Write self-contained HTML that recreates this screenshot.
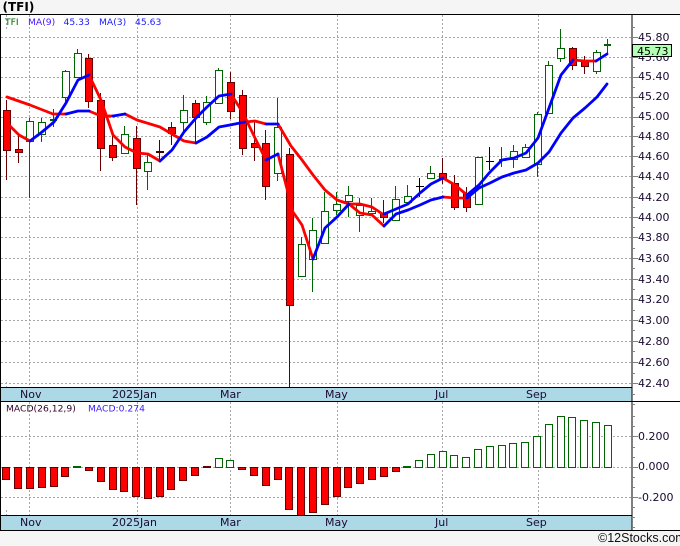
<!DOCTYPE html>
<html><head><meta charset="utf-8"><title>TFI</title>
<style>
html,body{margin:0;padding:0;background:#f5f5f5;width:680px;height:546px;overflow:hidden}
svg{display:block}
text{font-family:"DejaVu Sans",sans-serif;font-size:11px;fill:#1a0a33}
.s{font-size:9.2px}
</style></head><body>
<svg width="680" height="546" viewBox="0 0 680 546" xmlns="http://www.w3.org/2000/svg">
<rect x="0" y="14" width="680" height="517" fill="#fff"/>
<rect x="1" y="388" width="631" height="13" fill="#add8e6"/>
<rect x="1" y="516" width="631" height="14" fill="#add8e6"/>
<g shape-rendering="crispEdges" fill="none">
<path stroke="#a6a6a6" stroke-dasharray="2 2" d="M1 37.5H632M1 57.5H632M1 77.5H632M1 97.5H632M1 117.5H632M1 136.5H632M1 156.5H632M1 176.5H632M1 197.5H632M1 217.5H632M1 237.5H632M1 258.5H632M1 279.5H632M1 299.5H632M1 320.5H632M1 341.5H632M1 362.5H632M1 383.5H632M1 436.5H632M1 467.5H632M1 497.5H632"/>
<path stroke="#a6a6a6" stroke-dasharray="2 2" d="M29.5 15V388M137.5 15V388M230.5 15V388M337.5 15V388M442.5 15V388M538.5 15V388M29.5 402V516M137.5 402V516M230.5 402V516M337.5 402V516M442.5 402V516M538.5 402V516M6.5 15V30M6.5 382V388M6.5 510V516"/>
<path stroke="#808080" d="M633 37.5h5M633 57.5h5M633 77.5h5M633 97.5h5M633 117.5h5M633 136.5h5M633 156.5h5M633 176.5h5M633 197.5h5M633 217.5h5M633 237.5h5M633 258.5h5M633 279.5h5M633 299.5h5M633 320.5h5M633 341.5h5M633 362.5h5M633 383.5h5M633 436.5h5M633 467.5h5M633 497.5h5"/>
<path stroke="#808080" d="M633 27.5h2M633 47.5h2M633 67.5h2M633 87.5h2M633 107.5h2M633 126.5h2M633 146.5h2M633 166.5h2M633 187.5h2M633 207.5h2M633 227.5h2M633 248.5h2M633 268.5h2M633 289.5h2M633 310.5h2M633 330.5h2M633 351.5h2M633 373.5h2M633 394.5h2M633 404.5h2M633 416.5h2M633 426.5h2M633 447.5h2M633 457.5h2M633 477.5h2M633 487.5h2M633 507.5h2M633 517.5h2M633 527.5h2"/>

<!-- green candles -->
<path stroke="#006400" d="M29.5 118V198M41.5 118V142M53.5 109V127M65.5 70V103M77.5 49V78M124.5 126V153M147.5 155V190M183.5 95V133M206.5 96V125M218.5 68V103M277.5 98V181M301.5 237V276M312.5 218V292M324.5 192V243M336.5 192V215M348.5 186V217M359.5 198V232M371.5 198V213M395.5 186V220M407.5 185V203M430.5 166V179M478.5 157V204M501.5 147V167M513.5 145V168M525.5 144V157M537.5 112V177M548.5 61V113M560.5 29V62M596.5 50V74M607.5 39V55"/>
<path stroke="#006400" fill="#fff" d="M26.500 121.500h7v20h-7zM38.500 122.500h7v12h-7zM62.500 71.500h7v26h-7zM74.500 53.500h7v24h-7zM121.500 134.500h7v19h-7zM144.500 162.500h7v9h-7zM180.500 110.500h7v12h-7zM203.500 102.500h7v20h-7zM215.500 70.500h7v33h-7zM274.500 127.500h7v46h-7zM298.500 244.500h7v32h-7zM309.500 230.500h7v29h-7zM321.500 211.500h7v32h-7zM333.500 204.500h7v6h-7zM345.500 195.500h7v6h-7zM356.500 205.500h7v10h-7zM368.500 211.500h7v2h-7zM392.500 199.500h7v21h-7zM404.500 196.500h7v6h-7zM427.500 173.500h7v5h-7zM475.500 157.500h7v47h-7zM510.500 151.500h7v8h-7zM522.500 147.500h7v10h-7zM534.500 114.500h7v50h-7zM545.500 65.500h7v48h-7zM557.500 48.500h7v10h-7zM593.500 52.500h7v19h-7z"/>
<path stroke="#006400" d="M50 119.500h7M50 120.500h7M499 159.500h7M499 160.500h7M604 44.500h7M604 45.500h7"/>
<!-- red candles -->
<path stroke="#600" d="M6.500 100V180M18.500 133V163M88.500 54V108M100.500 93V171M112.500 135V161M136.500 126V205M171.500 122V145M195.500 100V143M230.500 72V119M242.500 90V155M254.500 120V161M265.500 130V200M289.500 148V387M383.500 200V223M442.500 158V184M454.500 175V210M466.500 187V212M572.500 47V70M584.500 56V74"/>
<path stroke="#600" fill="#f00" d="M3.500 110.500h7v40h-7zM15.500 149.500h7v3h-7zM85.500 58.500h7v43h-7zM97.500 100.500h7v48h-7zM109.500 145.500h7v12h-7zM133.500 138.500h7v30h-7zM168.500 127.500h7v6h-7zM192.500 103.500h7v14h-7zM227.500 82.500h7v29h-7zM239.500 95.500h7v53h-7zM251.500 143.500h7v4h-7zM262.500 143.500h7v43h-7zM286.500 154.500h7v151h-7zM380.500 213.500h7v4h-7zM439.500 173.500h7v6h-7zM451.500 183.500h7v24h-7zM463.500 193.500h7v14h-7zM569.500 48.500h7v17h-7zM581.500 60.500h7v6h-7z"/>
<!-- dojis -->
<path stroke="#4a0000" d="M159.500 140V162M156 152.500h8M156 151.500h8"/>
<path stroke="#000" d="M419.500 178V197M416 186.500h8M489.500 147V170M486 161.500h8"/>

<!-- MACD bars -->
<path stroke="#600" fill="#f00" d="M2.500 467.500h7v12h-7zM14.500 467.500h7v21h-7zM26.500 467.500h7v21h-7zM38.500 467.500h7v20h-7zM50.500 467.500h7v19h-7zM61.500 467.500h7v9h-7zM85.500 467.500h7v3h-7zM97.500 467.500h7v14h-7zM109.500 467.500h7v22h-7zM120.500 467.500h7v24h-7zM132.500 467.500h7v29h-7zM144.500 467.500h7v31h-7zM156.500 467.500h7v29h-7zM167.500 467.500h7v22h-7zM179.500 467.500h7v13h-7zM191.500 467.500h7v8h-7zM238.500 467.500h7v2h-7zM250.500 467.500h7v8h-7zM262.500 467.500h7v18h-7zM274.500 467.500h7v12h-7zM285.500 467.500h7v42h-7zM297.500 467.500h7v48h-7zM309.500 467.500h7v45h-7zM321.500 467.500h7v37h-7zM333.500 467.500h7v29h-7zM344.500 467.500h7v20h-7zM356.500 467.500h7v16h-7zM368.500 467.500h7v12h-7zM380.500 467.500h7v9h-7zM392.500 467.500h7v4h-7z"/>
<path stroke="#006400" fill="#fff" d="M215.500 458.500h7v9h-7zM226.500 460.500h7v7h-7zM415.500 460.500h7v7h-7zM427.500 454.500h7v13h-7zM439.500 451.500h7v16h-7zM450.500 455.500h7v12h-7zM462.500 457.500h7v10h-7zM474.500 449.500h7v18h-7zM486.500 446.500h7v21h-7zM498.500 445.500h7v22h-7zM509.500 443.500h7v24h-7zM521.500 442.500h7v25h-7zM533.500 436.500h7v31h-7zM545.500 424.500h7v43h-7zM557.500 416.500h7v51h-7zM568.500 417.500h7v50h-7zM580.500 420.500h7v47h-7zM592.500 422.500h7v45h-7zM604.500 425.500h7v42h-7z"/>
<path stroke="#006400" d="M73 466.500h8M73 467.500h8M403 466.500h8M403 467.500h8"/>
<path stroke="#600" d="M203 467.500h8M203 466.500h8"/>
</g>

<!-- moving averages -->
<g fill="none" stroke-width="2.800" stroke-linecap="round" stroke-linejoin="round">
<g stroke="#f00">
<polyline points="7,97 30,105 53,114 66,114"/>
<polyline points="89,111 101,116 113,116"/>
<polyline points="125,114 137,120 160,127 172,134 184,141 196,143"/>
<polyline points="245,122 255,121 266,124"/>
<polyline points="278,124 291,146 302,160 313,175 325,190 337,200 349,204 360,204 372,207 384,215"/>
<polyline points="7,123 19,135 30,141"/>
<polyline points="89,75 101,100 113,135 125,147 137,153 148,154 160,161"/>
<polyline points="231,94 243,113 255,138 266,160"/>
<polyline points="278,154 293,212 302,225 313,259"/>
<polyline points="349,204 360,213 372,215 384,226"/>
<polyline points="443,178 455,185 467,195"/>
<polyline points="443,197 455,198 467,198"/>
<polyline points="573,60 585,61 596,61"/>
</g>
<g stroke="#00f">
<polyline points="66,114 78,111 89,111"/>
<polyline points="113,116 125,114"/>
<polyline points="196,143 207,137 219,127 230,125 245,122"/>
<polyline points="266,124 278,124"/>
<polyline points="30,141 42,132 54,122 66,103 78,80 89,75"/>
<polyline points="160,161 172,150 184,132 196,118 207,107 219,96 231,94"/>
<polyline points="266,160 278,154"/>
<polyline points="313,259 325,228 337,217 349,204"/>
<polyline points="384,214 396,209 408,204 420,193 431,184 443,178"/>
<polyline points="384,226 396,214 408,210 420,205 431,200 443,197"/>
<polyline points="467,198 479,188 490,183 502,177 514,173 526,170 538,163 549,152 561,133 573,118 585,108 597,97 607,84"/>
<polyline points="467,195 479,185 490,172 502,160 514,158 526,153 538,138 549,108 561,75 573,60"/>
<polyline points="596,61 607,54"/>
</g>
</g>

<!-- frame -->
<g shape-rendering="crispEdges" fill="none" stroke="#000">
<path d="M0 14.500H680M.5 14V531M0 530.500H680M1 387.500H632M0 401.500H680M1 515.500H632"/>
<path d="M632 14V530"/>
</g>

<!-- labels -->
<text x="2.500" y="11" style="font:bold 12px 'DejaVu Sans',sans-serif;fill:#000">(TFI)</text>
<text class="s" x="5" y="25" style="fill:#006400">TFI</text>
<text class="s" x="28" y="25" style="fill:#4a1aff">MA(9)</text>
<text class="s" x="63.500" y="25" style="fill:#1a1aff">45.33</text>
<text class="s" x="99" y="25" style="fill:#1a1aff">MA(3)</text>
<text class="s" x="135" y="25" style="fill:#1a1aff">45.63</text>
<text class="s" x="6" y="411.500" style="fill:#30002a">MACD(26,12,9)</text>
<text class="s" x="88" y="411.500" style="fill:#3a1aff">MACD:0.274</text>

<text x="638" y="41">45.80</text>
<text x="638" y="61">45.60</text>
<text x="638" y="80">45.40</text>
<text x="638" y="100">45.20</text>
<text x="638" y="120">45.00</text>
<text x="638" y="140">44.80</text>
<text x="638" y="160">44.60</text>
<text x="638" y="180">44.40</text>
<text x="638" y="201">44.20</text>
<text x="638" y="221">44.00</text>
<text x="638" y="241">43.80</text>
<text x="638" y="262">43.60</text>
<text x="638" y="283">43.40</text>
<text x="638" y="303">43.20</text>
<text x="638" y="324">43.00</text>
<text x="638" y="345">42.80</text>
<text x="638" y="366">42.60</text>
<text x="638" y="387">42.40</text>
<text x="638" y="440">0.200</text>
<text x="638" y="470">0.000</text>
<text x="638" y="501">-0.200</text>

<rect x="632.500" y="44.500" width="39" height="12" fill="#b3ffb3" stroke="#000" shape-rendering="crispEdges"/>
<text x="637" y="55" style="fill:#000">45.73</text>

<text x="20" y="398">Nov</text><text x="112" y="398">2025Jan</text><text x="220" y="398">Mar</text><text x="325" y="398">May</text><text x="435" y="398">Jul</text><text x="526" y="398">Sep</text>
<text x="20" y="526">Nov</text><text x="112" y="526">2025Jan</text><text x="220" y="526">Mar</text><text x="325" y="526">May</text><text x="435" y="526">Jul</text><text x="526" y="526">Sep</text>

<text x="598" y="542" style="font:12.500px 'Liberation Sans',sans-serif;fill:#111">©12Stocks.com</text>
</svg>
</body></html>
